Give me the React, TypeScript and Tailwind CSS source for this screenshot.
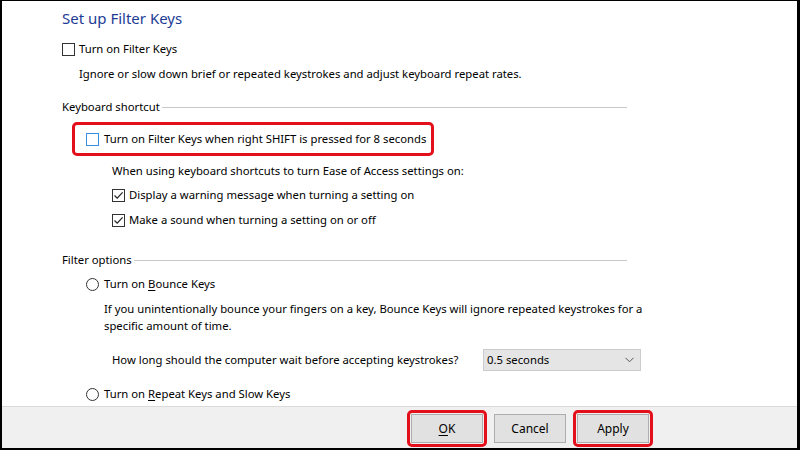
import React from 'react';

const font = { fontFamily: '"Noto Sans", "Open Sans", sans-serif' };

const CheckBox = ({ checked = false, focused = false }: { checked?: boolean; focused?: boolean }) => (
    <span
        className={`flex h-[13px] w-[13px] shrink-0 items-center justify-center border bg-white ${
            focused ? 'border-[#3a8ee0]' : 'border-[#333333]'
        }`}
    >
        {checked && (
            <svg width="11" height="11" viewBox="0 0 11 11" fill="none">
                <path d="M1.5 5.5 L4.2 8.2 L9.6 2.4" stroke="#222" strokeWidth="1.2" />
            </svg>
        )}
    </span>
);

const Radio = () => (
    <span className="h-[13px] w-[13px] shrink-0 rounded-full border border-[#333333] bg-white" />
);

const GroupHeader = ({ label }: { label: string }) => (
    <div className="flex h-5 items-center pr-[170px]">
        <span>{label}</span>
        <span className="ml-[2px] h-px flex-1 bg-[#c8c8c8]" />
    </div>
);

const Button = ({ children }: { children: React.ReactNode }) => (
    <button className="flex h-[29px] w-[72px] items-center justify-center border border-[#adadad] bg-[#e1e1e1] text-[12px] text-black">
        {children}
    </button>
);

export default function App() {
    return (
        <div
            className="flex h-[450px] w-[800px] flex-col overflow-hidden whitespace-nowrap border-t border-r-[3px] border-b-2 border-l-2 border-black bg-white text-[11.3px] text-black"
            style={font}
        >
            <div className="flex flex-1 flex-col pl-[60px]">
                {/* title */}
                <div className="mt-[5px] flex h-6 items-center text-[15px] text-[#1e3c94]">Set up Filter Keys</div>

                <div className="mt-[9px] flex h-5 items-center gap-[4px]">
                    <CheckBox />
                    <span>Turn on Filter Keys</span>
                </div>
                <div className="mt-[5px] flex h-5 items-center pl-[17px]">
                    Ignore or slow down brief or repeated keystrokes and adjust keyboard repeat rates.
                </div>

                <div className="mt-[13px]">
                    <GroupHeader label="Keyboard shortcut" />
                </div>

                {/* highlighted shortcut option */}
                <div className="mt-[5px] ml-[10px] flex h-[34px] w-[362px] items-center gap-[5px] rounded-[5px] border-[3px] border-[#e3101c] pl-[11px]">
                    <CheckBox focused />
                    <span>Turn on Filter Keys when right SHIFT is pressed for 8 seconds</span>
                </div>

                <div className="mt-[5px] flex h-5 items-center pl-[50px]">
                    When using keyboard shortcuts to turn Ease of Access settings on:
                </div>
                <div className="mt-1 flex h-5 items-center gap-[4px] pl-[50px]">
                    <CheckBox checked />
                    <span>Display a warning message when turning a setting on</span>
                </div>
                <div className="mt-[5px] flex h-5 items-center gap-[4px] pl-[50px]">
                    <CheckBox checked />
                    <span>Make a sound when turning a setting on or off</span>
                </div>

                <div className="mt-5">
                    <GroupHeader label="Filter options" />
                </div>

                <div className="mt-1 flex h-5 items-center gap-[5px] pl-[24px]">
                    <Radio />
                    <span>
                        Turn on <span className="underline underline-offset-2">B</span>ounce Keys
                    </span>
                </div>
                <div className="mt-[6px] pl-[42px] leading-[17px]">
                    <div>If you unintentionally bounce your fingers on a key, Bounce Keys will ignore repeated keystrokes for a</div>
                    <div>specific amount of time.</div>
                </div>

                <div className="mt-[15px] flex h-[22px] items-center pl-[50px]">
                    <span className="w-[371px]">How long should the computer wait before accepting keystrokes?</span>
                    <div className="flex h-[22px] w-[158px] items-center justify-between border border-[#cccccc] bg-[#e5e5e5] pl-[3px] pr-[6px]">
                        <span>0.5 seconds</span>
                        <svg width="9" height="6" viewBox="0 0 9 6" fill="none">
                            <path d="M0.5 0.8 L4.5 4.8 L8.5 0.8" stroke="#555" strokeWidth="1" />
                        </svg>
                    </div>
                </div>

                <div className="mt-[13px] flex h-5 items-center gap-[5px] pl-[24px]">
                    <Radio />
                    <span>
                        Turn on <span className="underline underline-offset-2">R</span>epeat Keys and Slow Keys
                    </span>
                </div>
            </div>

            {/* footer buttons */}
            <div className="flex h-[42px] shrink-0 items-start justify-end gap-[3px] border-t border-[#dadada] bg-[#f0f0f0] pt-[3px] pr-[144px]">
                <div className="rounded-[5px] border-[3px] border-[#e3101c] p-px">
                    <Button>
                        <span className="underline underline-offset-2">O</span>K
                    </Button>
                </div>
                <div className="p-[4px]">
                    <Button>Cancel</Button>
                </div>
                <div className="rounded-[5px] border-[3px] border-[#e3101c] p-px">
                    <Button>Apply</Button>
                </div>
            </div>
        </div>
    );
}
